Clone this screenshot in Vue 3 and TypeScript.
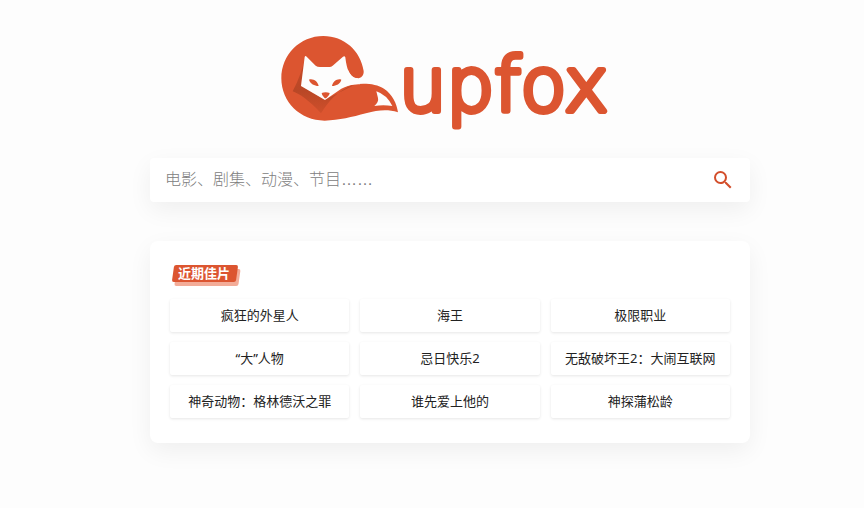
<script setup lang="ts">
import { ref } from 'vue'

interface Film {
  id: number
  title: string
}

const keyword = ref('')

const titles: string[] = [
  '疯狂的外星人',
  '海王',
  '极限职业',
  '“大”人物',
  '忌日快乐2',
  '无敌破坏王2：大闹互联网',
  '神奇动物：格林德沃之罪',
  '谁先爱上他的',
  '神探蒲松龄',
]

const films: Film[] = titles.map((title, id) => ({ id, title }))
</script>

<template>
  <div class="page">
    <main class="content">
      <a class="logo" href="#" aria-label="upfox">
        <svg width="338" height="96" viewBox="0 0 338 96">
          <defs>
            <linearGradient id="fold" x1="0" y1="0" x2="0" y2="1">
              <stop offset="0" stop-color="#c94b29" />
              <stop offset="0.6" stop-color="#b94726" />
              <stop offset="1" stop-color="#cf4f2b" />
            </linearGradient>
          </defs>
          <g transform="translate(-11 -10) scale(0.3333)">
            <path
              fill="#dc5530"
              d="M34 160C34 89 90 33 160 33C222 33 272 77 281 138C282 151 274 160 262 160C248 160 239 146 233 132L222 186C255 174 311 171 342 191C368 209 380 235 384 262C350 252 324 256 288 265C246 276 208 286 164 287C90 287 34 230 34 160Z"
            />
            <path
              fill="url(#fold)"
              d="M105 96C99 130 86 164 68 199C89 207 116 225 153 265C173 232 203 193 254 179L165 224L93 182Z"
            />
            <path
              fill="#fdfdfd"
              d="M104 96Q106 91 110 95L137 122Q142 126 150 126L178 126Q184 126 188 122L219 95Q224 91 226 97C229 119 234 161 264 160L270 178C252 177 234 181 214 191L165 225L93 183Z"
            />
            <path
              fill="#dc5530"
              d="M117 164C129 160 143 169 146 183C133 182 121 177 117 164ZM214 164C202 160 189 169 186 183C199 182 211 177 214 164ZM155 204Q167 199 179 204Q179 210 169 219Q166 221 163 218Q155 211 155 204Z"
            />
            <path
              fill="#fdfdfd"
              d="M319 199Q350 209 367 243Q340 238 313 243Q327 231 324 219Q322 211 319 199Z"
            />
          </g>
          <text class="wordmark" x="118" y="76">upfox</text>
        </svg>
      </a>

      <form class="search" role="search" @submit.prevent>
        <input
          v-model="keyword"
          class="search-input"
          type="text"
          aria-label="搜索"
          placeholder="电影、剧集、动漫、节目……"
        />
        <button class="search-button" type="submit" aria-label="搜索">
          <svg width="24" height="24" viewBox="0 0 24 24" fill="currentColor">
            <path
              d="M15.5 14h-.79l-.28-.27A6.47 6.47 0 0 0 16 9.5 6.5 6.5 0 1 0 9.5 16c1.61 0 3.09-.59 4.23-1.57l.27.28v.79l5 4.99L20.49 19l-4.99-5zm-6 0a4.5 4.5 0 1 1 0-9 4.5 4.5 0 0 1 0 9z"
            />
          </svg>
        </button>
      </form>

      <section class="panel">
        <h2 class="badge"><span class="badge-text">近期佳片</span></h2>
        <ul class="films">
          <li v-for="film in films" :key="film.id">
            <a class="film" href="#">{{ film.title }}</a>
          </li>
        </ul>
      </section>
    </main>
  </div>
</template>

<style>
body {
  margin: 0;
  background: #fdfdfd;
}
</style>

<style scoped>
.page {
  box-sizing: border-box;
  padding: 35px 0 64px 36px;
  font-family: 'Noto Sans', 'Noto Sans CJK SC', sans-serif;
  color: #222;
}

.content {
  max-width: 600px;
  margin: 0 auto;
}

.logo {
  display: flex;
  justify-content: center;
  margin-bottom: 27px;
}

.wordmark {
  font-family: 'DejaVu Sans', sans-serif;
  font-size: 75px;
  font-weight: 200;
  fill: #dc5530;
  stroke: #dc5530;
  stroke-width: 6px;
  stroke-linejoin: round;
}

.search {
  display: flex;
  align-items: center;
  height: 44px;
  margin-bottom: 39px;
  border-radius: 4px;
  background: #fff;
  box-shadow: 0 8px 24px rgba(0, 0, 0, 0.06);
}

.search-input {
  flex: 1;
  min-width: 0;
  height: 100%;
  box-sizing: border-box;
  padding: 0 15px;
  border: 0;
  outline: 0;
  background: transparent;
  font-family: 'Liberation Sans', 'Noto Sans CJK SC', sans-serif;
  font-size: 16px;
  font-weight: 300;
  color: #222;
}

.search-input::placeholder {
  color: #808080;
  opacity: 1;
}

.search-button {
  display: flex;
  padding: 0;
  margin-right: 15px;
  border: 0;
  background: transparent;
  color: #d34e2b;
  cursor: pointer;
}

.panel {
  padding: 24px 20px 25px;
  border-radius: 8px;
  background: #fff;
  box-shadow: 0 8px 24px rgba(0, 0, 0, 0.06);
}

.badge {
  width: fit-content;
  margin: 0 0 17px 3px;
  padding: 0 7px 0 5px;
  border-radius: 2px;
  background: #dc5530;
  box-shadow: 3px 4px 0 #f3ac98;
  font-size: 13px;
  font-weight: 700;
  line-height: 17px;
  color: #fff;
  transform: skewX(-8deg);
}

.badge-text {
  display: block;
  transform: skewX(8deg);
}

.films {
  display: grid;
  grid-template-columns: repeat(3, minmax(0, 1fr));
  gap: 10px 11px;
  margin: 0;
  padding: 0;
  list-style: none;
}

.film {
  display: block;
  border-radius: 2px;
  background: #fff;
  box-shadow: 0 1px 3px rgba(0, 0, 0, 0.1);
  font-size: 13px;
  line-height: 33px;
  text-align: center;
  text-decoration: none;
  color: #222;
}
</style>
